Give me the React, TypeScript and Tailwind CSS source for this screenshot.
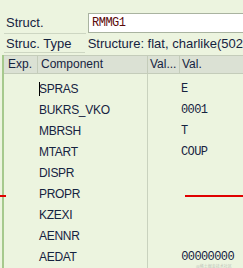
import React from "react";

const rows: [string, string, boolean?][] = [
  ["SPRAS", "E"],
  ["BUKRS_VKO", "0001"],
  ["MBRSH", "T"],
  ["MTART", "COUP"],
  ["DISPR", ""],
  ["PROPR", ""],
  ["KZEXI", ""],
  ["AENNR", ""],
  ["AEDAT", "00000000", true],
];

export default function App() {
  return (
    <div
      className="relative w-[243px] h-[268px] overflow-hidden bg-[#ecf4df] text-[#16233f]"
      style={{ fontFamily: '"Liberation Sans", Arial, sans-serif' }}
    >
      <div className="h-[13px]" />
      {/* Struct row */}
      <div className="flex h-[20px]">
        <div className="w-[88px] pl-[6px] pr-[2px] text-[13px] leading-[20px]">
          <div className="border-b border-[#cdd6c2] h-[21px] ml-[-2px] pl-[2px]">Struct.</div>
        </div>
        <div
          className="flex-1 bg-white border border-[#a9b3a0] border-r-0 h-[20px] pl-[3px] text-[12px] leading-[18px] text-[#5a0a0a]"
          style={{ fontFamily: '"Liberation Mono", monospace', letterSpacing: "-0.5px" }}
        >
          RMMG1
        </div>
      </div>
      {/* Struc. Type row */}
      <div className="flex h-[19px] mt-[1px]">
        <div className="w-[88px] pl-[6px] text-[13px] leading-[19px]">
          <div className="border-b border-[#cdd6c2] h-[19px] ml-[-2px] pl-[2px]">Struc. Type</div>
        </div>
        <div className="flex-1 pl-[3px] text-[13px] leading-[19px] whitespace-nowrap">
          Structure: flat, charlike(502
        </div>
      </div>
      {/* Table */}
      <div className="mt-[2px] ml-[2px] border-l-2 border-[#a6c98d] h-[220px]">
        <div className="flex h-[19px] bg-[#dbe1d4] border-t border-b border-[#c4ccba] text-[12px] leading-[17px]">
          <div className="w-[34px] pl-[4px] border-r border-[#c4ccba]">Exp.</div>
          <div className="w-[110px] pl-[3px] border-r border-[#c4ccba]">Component</div>
          <div className="w-[32px] pl-[2px] border-r border-[#c4ccba] whitespace-nowrap overflow-hidden">Val...</div>
          <div className="flex-1 pl-[2px]">Val.</div>
        </div>
        <div className="flex h-full">
          <div className="w-[144px] pt-[5px] border-r border-[#c9d2be]">
            {rows.map(([name], i) => (
              <div key={name} className="relative h-[21px] pl-[35px] text-[12px] leading-[21px]" style={{ letterSpacing: "-0.3px" }}>
                {i === 0 && <span className="absolute left-[35px] top-[3px] w-[1px] h-[14px] bg-black" />}
                {name}
              </div>
            ))}
          </div>
          <div className="w-[58px] pt-[5px]">
            {rows.map(([name, val, right]) => (
              <div
                key={name}
                className={`h-[21px] pt-[4px] text-[12px] leading-[13px] whitespace-nowrap ${right ? "text-right -mr-[28px]" : "pl-[33px]"}`}
                style={{ fontFamily: '"Liberation Mono", monospace', letterSpacing: "-0.6px" }}
              >
                {val}
              </div>
            ))}
          </div>
        </div>
      </div>
      {/* red lines */}
      <div className="absolute left-0 top-[195px] w-[6px] h-[2px] bg-[#e00000]" />
      <div className="absolute left-[185px] top-[195px] w-[58px] h-[2px] bg-[#e00000]" />
      <div
        className="absolute left-[196px] top-[264px] h-[4px] text-[4px] leading-[4px] text-[#c0c6bb] whitespace-nowrap"
        style={{ fontFamily: '"Noto Sans CJK SC", sans-serif' }}
      >
        @稀土掘金技术社区
      </div>
    </div>
  );
}
